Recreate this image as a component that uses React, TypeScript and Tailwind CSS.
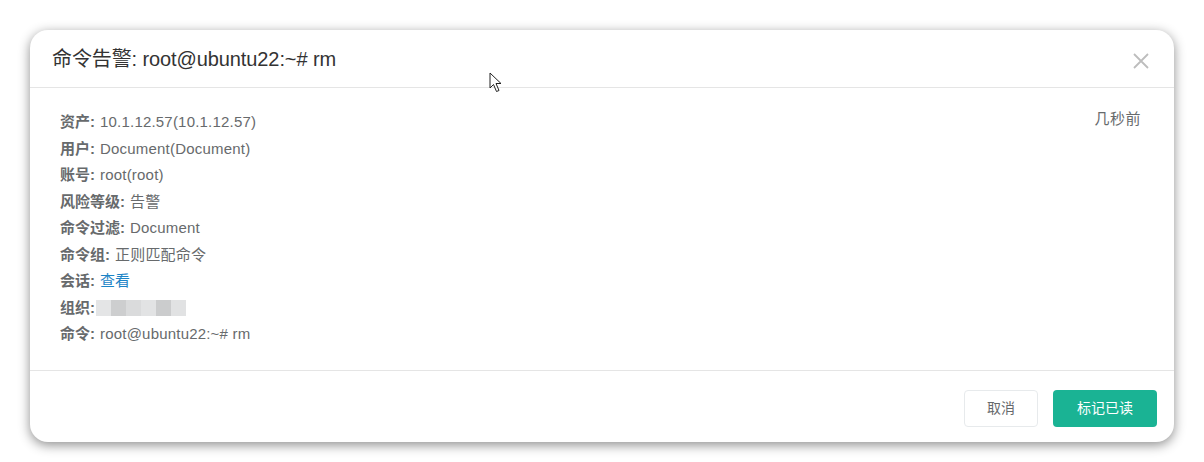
const rows: { label: string; value?: string; link?: boolean; blur?: boolean }[] = [
  { label: '资产', value: '10.1.12.57(10.1.12.57)' },
  { label: '用户', value: 'Document(Document)' },
  { label: '账号', value: 'root(root)' },
  { label: '风险等级', value: '告警' },
  { label: '命令过滤', value: 'Document' },
  { label: '命令组', value: '正则匹配命令' },
  { label: '会话', value: '查看', link: true },
  { label: '组织', blur: true },
  { label: '命令', value: 'root@ubuntu22:~# rm' },
];

const blurShades = ['bg-[#e4e5e6]', 'bg-[#cdcecf]', 'bg-[#dadbdc]', 'bg-[#e2e3e4]', 'bg-[#cbcccd]', 'bg-[#e1e2e3]'];

export default function App() {
  return (
    <div
      className="relative w-[1204px] h-[462px] bg-white pt-[30px] pl-[30px]"
      style={{ fontFamily: '"Liberation Sans", "Noto Sans CJK SC", sans-serif' }}
    >
      <div className="w-[1144px] h-[412px] bg-white rounded-[18px] shadow-[0_3px_12px_rgba(0,0,0,0.45)] flex flex-col overflow-hidden">
        {/* Header */}
        <div className="h-[58px] shrink-0 flex items-center justify-between pl-[22px] pr-[25px] border-b border-[#e5e5e5]">
          <h4 className="text-[20px] text-[#333] leading-none mt-[1px] tracking-[-0.1px]">命令告警: root@ubuntu22:~# rm</h4>
          <button className="mt-[4px]">
            <svg width="16" height="16" viewBox="0 0 16 16">
              <path d="M1 1 L15 15 M15 1 L1 15" stroke="#bdbdbd" strokeWidth="1.8" />
            </svg>
          </button>
        </div>

        {/* Body */}
        <div className="flex-1 flex justify-between pl-[30px] pr-[33px] pt-[21px] text-[15px] text-[#676a6c]">
          <div className="flex flex-col">
            {rows.map((r) => (
              <div key={r.label} className="flex items-center h-[26.5px]">
                <b className="font-bold">{r.label}:</b>
                {r.blur ? (
                  <span className="flex ml-[1px]">
                    {blurShades.map((c, i) => (
                      <span key={i} className={`w-[15px] h-[16px] ${c}`} />
                    ))}
                  </span>
                ) : r.link ? (
                  <a className="ml-[5px] text-[#1c84c6]">{r.value}</a>
                ) : (
                  <span className="ml-[5px] tracking-[0.2px]">{r.value}</span>
                )}
              </div>
            ))}
          </div>
          <div className="leading-none pt-[2px] tracking-[0.5px]">几秒前</div>
        </div>

        {/* Footer */}
        <div className="h-[72px] shrink-0 border-t border-[#e5e5e5] flex items-center justify-end gap-[15px] pr-[17px] pt-[3px]">
          <button className="w-[74px] h-[37px] rounded-[4px] border border-[#e7eaec] bg-white text-[14px] text-[#676a6c]">
            取消
          </button>
          <button className="w-[104px] h-[37px] rounded-[4px] bg-[#1ab394] text-[14px] text-white">
            标记已读
          </button>
        </div>
      </div>

      {/* mouse cursor */}
      <svg className="absolute left-[489px] top-[72px]" width="14" height="22" viewBox="0 0 14 22">
        <path d="M1 1 L1 16 L4.5 12.5 L7.5 19.5 L10 18.5 L7 11.5 L12 11.5 Z" fill="white" stroke="#222" strokeWidth="1" strokeLinejoin="round" />
      </svg>
    </div>
  );
}
